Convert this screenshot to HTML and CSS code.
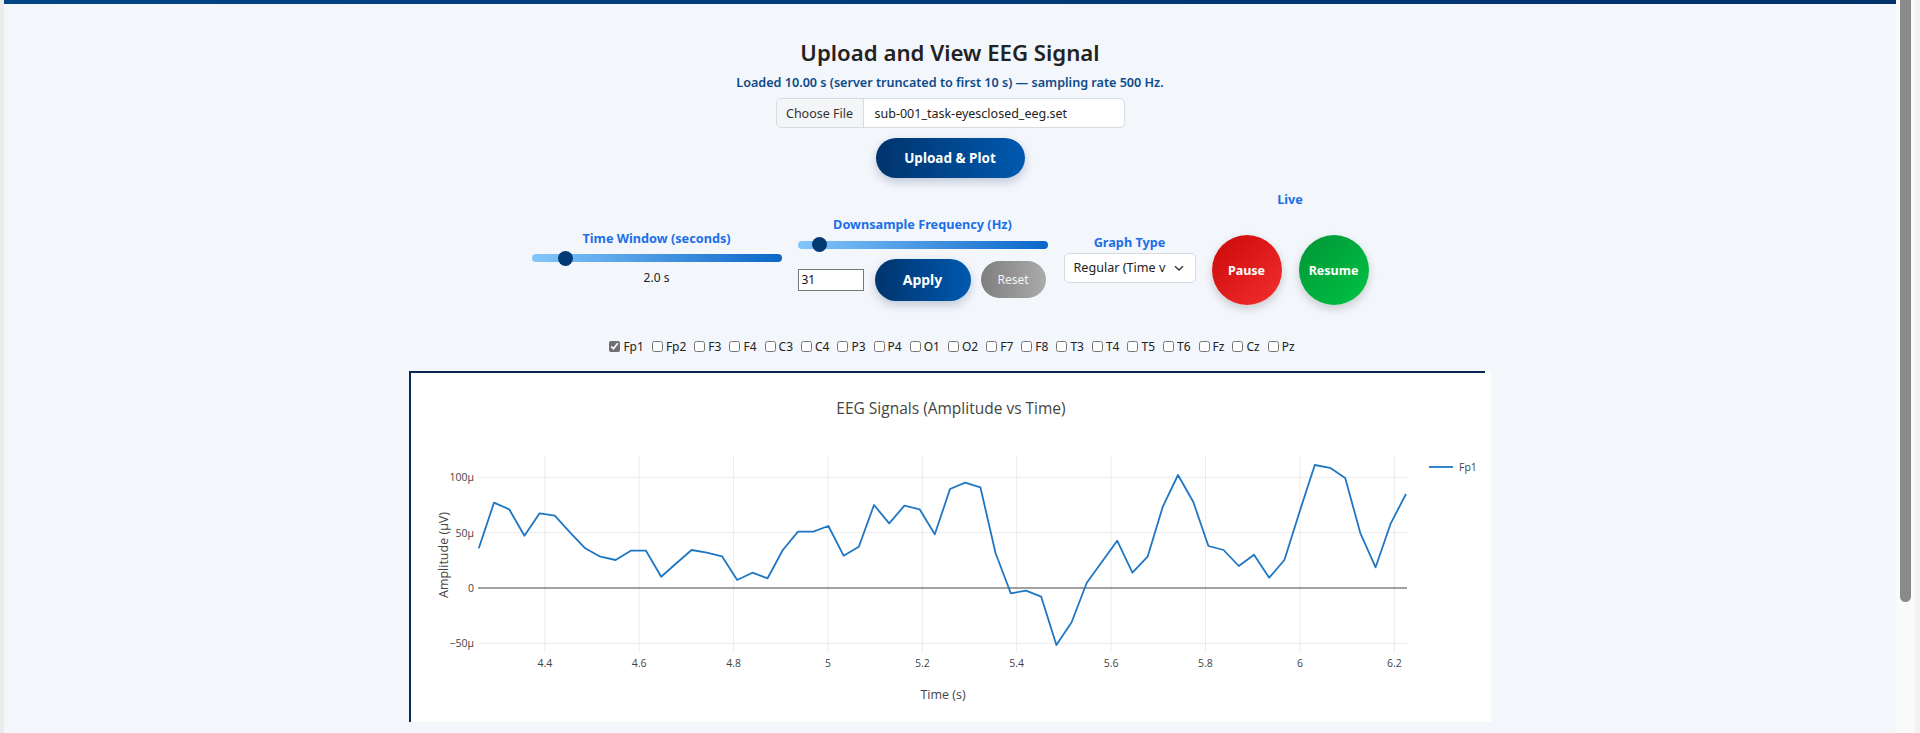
FILE: index.html
```html
<!DOCTYPE html>
<html lang="en">
<head>
<meta charset="utf-8">
<title>Upload and View EEG Signal</title>
<link rel="stylesheet" href="styles.css">
</head>
<body>
<div class="edge"></div>
<main class="page">
  <h1 class="title">Upload and View EEG Signal</h1>
  <p class="status">Loaded 10.00 s (server truncated to first 10 s) — sampling rate 500 Hz.</p>
  <div class="file">
    <span class="file-btn">Choose File</span>
    <span class="file-name">sub-001_task-eyesclosed_eeg.set</span>
  </div>
  <button class="btn-primary upload">Upload &amp; Plot</button>

  <div class="controls">
    <div class="group time">
      <span class="ctl-label">Time Window (seconds)</span>
      <input type="range" class="slider" min="1" max="10" step="0.5" value="2">
      <span class="value">2.0 s</span>
    </div>
    <div class="group ds">
      <span class="ctl-label">Downsample Frequency (Hz)</span>
      <input type="range" class="slider" min="1" max="500" value="31">
      <div class="ds-row">
        <input type="text" class="num" value="31">
        <button class="btn-primary apply">Apply</button>
        <button class="btn-reset">Reset</button>
      </div>
    </div>
    <div class="group gt">
      <span class="ctl-label">Graph Type</span>
      <div class="select">
        <span class="select-text">Regular (Time v</span>
        <svg class="chev" width="12" height="12" viewBox="0 0 12 12"><path d="M2 4.2 L6 8 L10 4.2" fill="none" stroke="#333" stroke-width="1.3"/></svg>
      </div>
    </div>
    <div class="group live">
      <span class="ctl-label">Live</span>
      <div class="live-row">
        <button class="circle pause">Pause</button>
        <button class="circle resume">Resume</button>
      </div>
    </div>
  </div>

  <div class="channels">
    <label class="ch"><input type="checkbox" checked>Fp1</label>
    <label class="ch"><input type="checkbox">Fp2</label>
    <label class="ch"><input type="checkbox">F3</label>
    <label class="ch"><input type="checkbox">F4</label>
    <label class="ch"><input type="checkbox">C3</label>
    <label class="ch"><input type="checkbox">C4</label>
    <label class="ch"><input type="checkbox">P3</label>
    <label class="ch"><input type="checkbox">P4</label>
    <label class="ch"><input type="checkbox">O1</label>
    <label class="ch"><input type="checkbox">O2</label>
    <label class="ch"><input type="checkbox">F7</label>
    <label class="ch"><input type="checkbox">F8</label>
    <label class="ch"><input type="checkbox">T3</label>
    <label class="ch"><input type="checkbox">T4</label>
    <label class="ch"><input type="checkbox">T5</label>
    <label class="ch"><input type="checkbox">T6</label>
    <label class="ch"><input type="checkbox">Fz</label>
    <label class="ch"><input type="checkbox">Cz</label>
    <label class="ch"><input type="checkbox">Pz</label>
  </div>

  <div class="plot">
    <div class="plot-line"></div>
    <svg class="chart" width="1080" height="349" viewBox="411 373 1080 349">
      <defs><clipPath id="pa"><rect x="478" y="455" width="929" height="197"/></clipPath></defs>
      <g class="grid">
        <line x1="544.8" y1="455" x2="544.8" y2="652"/>
        <line x1="639.2" y1="455" x2="639.2" y2="652"/>
        <line x1="733.6" y1="455" x2="733.6" y2="652"/>
        <line x1="828" y1="455" x2="828" y2="652"/>
        <line x1="922.3" y1="455" x2="922.3" y2="652"/>
        <line x1="1016.7" y1="455" x2="1016.7" y2="652"/>
        <line x1="1111.1" y1="455" x2="1111.1" y2="652"/>
        <line x1="1205.5" y1="455" x2="1205.5" y2="652"/>
        <line x1="1299.9" y1="455" x2="1299.9" y2="652"/>
        <line x1="1394.3" y1="455" x2="1394.3" y2="652"/>
        <line x1="478" y1="477.3" x2="1407" y2="477.3"/>
        <line x1="478" y1="532.6" x2="1407" y2="532.6"/>
        <line x1="478" y1="643.3" x2="1407" y2="643.3"/>
      </g>
      <line class="zero" x1="478" y1="588" x2="1407" y2="588"/>
      <polyline class="trace" clip-path="url(#pa)" points="478.8,548.3 494,502.7 509.2,509.3 524.4,535.7 539.6,513.3 554.8,515.7 570,532.3 585.2,548.3 600.4,556.7 615.6,560 630.8,550.7 646,550.7 661.2,576.7 676.4,563.3 691.6,550 706.8,552.7 722,556.3 737.2,580 752.4,572.7 767.6,578.3 782.8,550 798,531.7 813.2,531.7 828.4,526 843.6,555.7 858.8,546.7 874,505 889.2,523.3 904.4,505.7 919.6,509.3 934.8,534.3 950,489 965.2,482.7 980.4,487.3 995.6,553.3 1010.8,593.3 1026,590.7 1041.2,596.7 1056.4,645 1071.6,622.3 1086.8,582.7 1102,561.7 1117.2,540.7 1132.4,572.7 1147.6,556.7 1162.8,506.7 1178,475 1193.2,501.7 1208.4,546 1223.6,550 1238.8,566 1254,554.7 1269.2,577.7 1284.4,560 1299.6,511.7 1314.8,465 1330,467.8 1345.2,478 1360.4,533.3 1375.6,567.3 1390.8,523.3 1406,494"/>
      <g class="ytick">
        <text x="474" y="481.3">100μ</text>
        <text x="474" y="536.6">50μ</text>
        <text x="474" y="592">0</text>
        <text x="474" y="647.3">−50μ</text>
      </g>
      <g class="xtick">
        <text x="544.8" y="666.5">4.4</text>
        <text x="639.2" y="666.5">4.6</text>
        <text x="733.6" y="666.5">4.8</text>
        <text x="828" y="666.5">5</text>
        <text x="922.3" y="666.5">5.2</text>
        <text x="1016.7" y="666.5">5.4</text>
        <text x="1111.1" y="666.5">5.6</text>
        <text x="1205.5" y="666.5">5.8</text>
        <text x="1299.9" y="666.5">6</text>
        <text x="1394.3" y="666.5">6.2</text>
      </g>
      <text class="ctitle" x="951" y="414">EEG Signals (Amplitude vs Time)</text>
      <text class="atitle" x="943" y="698.5">Time (s)</text>
      <text class="atitle" transform="translate(447.5 555) rotate(-90)" x="0" y="0">Amplitude (μV)</text>
      <line class="legline" x1="1429" y1="467" x2="1453" y2="467"/>
      <text class="legtext" x="1459" y="471">Fp1</text>
    </svg>
  </div>
</main>
<div class="scrollbar"><div class="thumb"></div></div>
</body>
</html>
```

FILE: styles.css
```css
* { box-sizing: border-box; }

html, body {
  margin: 0;
  height: 733px;
  overflow: hidden;
}

body {
  display: flex;
  background: #f7f7f7;
  font-family: "Noto Sans", "Open Sans", "Liberation Sans", sans-serif;
  color: #222;
}

.edge {
  width: 4px;
  flex: none;
  background: #ebebeb;
}

.page {
  width: 1892px;
  flex: none;
  background: #f3f6fb;
  border-top: 4px solid #003d7d;
  border-image: linear-gradient(90deg, #004486, #00316b) 1;
  display: flex;
  flex-direction: column;
  align-items: center;
  padding-top: 33px;
}

.title {
  margin: 0;
  font-size: 22.2px;
  line-height: 32px;
  font-weight: 600;
  color: #222;
}

.status {
  margin: 5px 0 0;
  font-size: 12.6px;
  line-height: 18px;
  font-weight: 600;
  color: #0c4a89;
}

.file {
  margin-top: 6px;
  width: 349px;
  height: 30px;
  display: flex;
  border: 1px solid #d7dbe2;
  border-radius: 5px;
  background: #fff;
  overflow: hidden;
  font-size: 12.5px;
}

.file-btn {
  width: 87px;
  flex: none;
  display: flex;
  align-items: center;
  justify-content: center;
  background: #f4f5f7;
  border-right: 1px solid #d7dbe2;
  color: #333;
}

.file-name {
  display: flex;
  align-items: center;
  padding-left: 11px;
  color: #222;
}

.btn-primary {
  border: 0;
  color: #fff;
  font-family: inherit;
  font-weight: 700;
  background: linear-gradient(90deg, #00346c, #0059b0);
  box-shadow: 0 4px 10px rgba(0, 40, 90, 0.22);
  cursor: pointer;
}

.upload {
  margin-top: 10px;
  width: 149px;
  height: 40px;
  border-radius: 20px;
  font-size: 13.5px;
}

.controls {
  margin-top: 13px;
  display: flex;
  align-items: center;
  gap: 16px;
}

.group {
  display: flex;
  flex-direction: column;
  align-items: center;
}

.ctl-label {
  font-size: 12.7px;
  line-height: 16px;
  font-weight: 700;
  color: #1b6fe8;
}

.time, .ds { width: 250px; }

.slider {
  -webkit-appearance: none;
  appearance: none;
  width: 250px;
  height: 16px;
  margin: 4px 0 0;
  background: transparent;
}
.slider::-webkit-slider-runnable-track {
  height: 8px;
  border-radius: 4px;
  background: linear-gradient(90deg, #84c6fb, #0a66c8);
}
.slider::-webkit-slider-thumb {
  -webkit-appearance: none;
  width: 15px;
  height: 15px;
  margin-top: -3.5px;
  border-radius: 50%;
  background: #033a74;
  border: 0;
}

.value {
  margin-top: 4px;
  font-size: 12px;
  line-height: 16px;
  color: #222;
}

.ds .slider { margin-top: 5px; }

.ds-row {
  margin-top: 6px;
  width: 250px;
  display: flex;
  align-items: center;
}

.num {
  width: 66px;
  height: 22px;
  margin: 0;
  padding: 1px 3px;
  border: 1px solid #767676;
  border-radius: 0;
  font-family: inherit;
  font-size: 12px;
  color: #111;
  background: #fff;
}

.apply {
  margin-left: 11px;
  width: 96px;
  height: 42px;
  border-radius: 21px;
  font-size: 14px;
}

.btn-reset {
  margin-left: 10px;
  width: 65px;
  height: 37px;
  padding: 0;
  border: 0;
  border-radius: 19px;
  background: linear-gradient(90deg, #7f7f7f, #ababab);
  color: #f4f4f4;
  font-family: inherit;
  font-size: 12px;
}

.gt .select {
  margin-top: 3px;
  width: 132px;
  height: 30px;
  display: flex;
  align-items: center;
  justify-content: space-between;
  background: #fff;
  border: 1px solid #d6dae1;
  border-radius: 5px;
  padding: 0 10px 0 9px;
  font-size: 12.6px;
  color: #222;
}

.select-text {
  white-space: nowrap;
}

.chev { flex: none; }

.live { padding-bottom: 20px; }

.live-row {
  margin-top: 28px;
  display: flex;
  gap: 17px;
}

.circle {
  width: 70px;
  height: 70px;
  padding: 0;
  border: 0;
  border-radius: 50%;
  color: #fff;
  font-family: inherit;
  font-weight: 700;
  font-size: 12.5px;
  box-shadow: 0 4px 10px rgba(0, 0, 0, 0.18);
}
.pause { background: linear-gradient(135deg, #c90808, #f5302f); }
.resume { background: linear-gradient(135deg, #009535, #00c445); }

.channels {
  margin-top: 11px;
  height: 20px;
  display: flex;
  align-items: center;
  font-size: 12px;
  color: #222;
}

.ch {
  display: flex;
  align-items: center;
  margin-right: 4px;
}
.ch:last-child { margin-right: 0; }
.ch input {
  margin: 0 3px 0 4px;
  width: 11px;
  height: 11px;
  accent-color: #6f6f6f;
}

.plot {
  margin-top: 15px;
  width: 1082px;
  height: 351px;
  background: #fff;
  border-left: 2px solid #0b2853;
  display: flex;
  flex-direction: column;
}

.plot-line {
  width: 1076px;
  height: 2px;
  background: #0b2853;
  margin-left: -2px;
}

.chart { display: block; font-family: "Open Sans", "Noto Sans", sans-serif; }

.grid line { stroke: #ececec; stroke-width: 1; }
.zero { stroke: #444; stroke-width: 1.2; }
.trace { fill: none; stroke: #1f77c4; stroke-width: 1.8; stroke-linejoin: round; }

.ytick text { font-size: 10.5px; fill: #444; text-anchor: end; }
.xtick text { font-size: 10.5px; fill: #444; text-anchor: middle; }
.ctitle { font-size: 15.5px; fill: #444; text-anchor: middle; }
.atitle { font-size: 12.5px; fill: #444; text-anchor: middle; }
.legline { stroke: #1f77c4; stroke-width: 1.8; }
.legtext { font-size: 10.5px; fill: #444; }

.scrollbar {
  flex: 1;
  background: #fafafa;
  padding-left: 4px;
  border-right: 5px solid #f1f1f1;
}

.thumb {
  width: 11px;
  height: 602px;
  background: #8a8a8a;
  border-radius: 0 0 6px 6px;
}
```
